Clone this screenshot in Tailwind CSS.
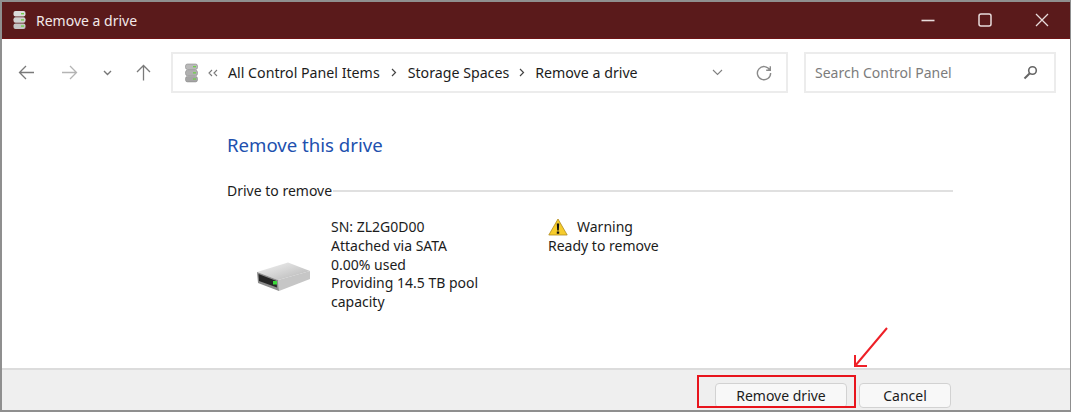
<!DOCTYPE html>
<html lang="en">
<head>
<meta charset="UTF-8">
<script src="https://cdn.jsdelivr.net/npm/@tailwindcss/browser@4"></script>
<title>Remove a drive</title>
</head>
<body class="bg-white">
<div class="relative w-[1071px] h-[412px] flex flex-col overflow-hidden bg-white border-t-2 border-l-2 border-b-2 border-r border-[#8f8f8f] font-['Noto_Sans','Open_Sans',sans-serif] text-[14px] text-[#1c1c1c]">

	<!-- title bar -->
	<div class="h-[37px] shrink-0 flex items-center bg-[#5a1a1b] border-b border-[#6e1416] text-white">
		<svg class="ml-[11px] w-[13px] h-[20px]" viewBox="0 0 13 20">
			<rect x="0.5" y="1" width="12" height="5.5" rx="2" fill="#dcdcdc"/>
			<rect x="0.5" y="7.2" width="12" height="5.5" rx="2" fill="#d0d0d0"/>
			<rect x="0.5" y="13.4" width="12" height="5.5" rx="2" fill="#c4c4c4"/>
			<rect x="8" y="3" width="3" height="1.4" fill="#6fd04a"/>
			<rect x="8" y="9.2" width="3" height="1.4" fill="#6fd04a"/>
			<rect x="8" y="15.4" width="3" height="1.4" fill="#6fd04a"/>
		</svg>
		<span class="ml-[10px] text-[14px] text-[#f3e9e9]">Remove a drive</span>
		<div class="ml-auto flex items-center gap-[43px] mr-[21px]">
			<svg class="w-[14px] h-[14px]" viewBox="0 0 14 14"><path d="M0.500 7.500h13" stroke="#e8dcdc" stroke-width="1.6"/></svg>
			<svg class="w-[14px] h-[14px]" viewBox="0 0 14 14"><rect x="1" y="1" width="12" height="12" rx="2" fill="none" stroke="#e8dcdc" stroke-width="1.500"/></svg>
			<svg class="w-[14px] h-[14px]" viewBox="0 0 14 14"><path d="M1 1l12 12M13 1L1 13" stroke="#e8dcdc" stroke-width="1.300"/></svg>
		</div>
	</div>

	<!-- navigation row -->
	<div class="h-[55px] shrink-0 flex items-start pt-[13px]">
		<div class="w-[169px] h-[41px] shrink-0 flex items-center">
			<svg class="ml-[16px] w-[16px] h-[15px]" viewBox="0 0 16 15"><path d="M16 7.500H1.500M8 1L1.500 7.500 8 14" fill="none" stroke="#7a7a7a" stroke-width="1.300"/></svg>
			<svg class="ml-[28px] w-[16px] h-[15px]" viewBox="0 0 16 15"><path d="M0 7.500h14.500M8 1l6.500 6.500L8 14" fill="none" stroke="#b4b4b4" stroke-width="1.300"/></svg>
			<svg class="ml-[25px] w-[9px] h-[6px]" viewBox="0 0 9 6"><path d="M1 1l3.500 3.500L8 1" fill="none" stroke="#777" stroke-width="1.400"/></svg>
			<svg class="ml-[24px] w-[15px] h-[17px]" viewBox="0 0 15 17"><path d="M7.500 16.500V1.500M1 8l6.500-6.500L14 8" fill="none" stroke="#7a7a7a" stroke-width="1.300"/></svg>
		</div>
		<div class="w-[617px] h-[41px] shrink-0 flex items-center border-2 border-[#ececec]">
			<svg class="ml-[12px] w-[13px] h-[20px]" viewBox="0 0 13 20">
				<rect x="0.5" y="1" width="12" height="5.5" rx="2" fill="#b9b9b9" stroke="#8c8c8c" stroke-width="0.6"/>
				<rect x="0.5" y="7.2" width="12" height="5.5" rx="2" fill="#b0b0b0" stroke="#8c8c8c" stroke-width="0.6"/>
				<rect x="0.5" y="13.4" width="12" height="5.5" rx="2" fill="#a5a5a5" stroke="#8c8c8c" stroke-width="0.6"/>
				<rect x="8" y="3" width="3" height="1.3" fill="#6fd04a"/>
				<rect x="8" y="9.2" width="3" height="1.3" fill="#6fd04a"/>
				<rect x="8" y="15.4" width="3" height="1.3" fill="#6fd04a"/>
			</svg>
			<svg class="ml-[10px] w-[10px] h-[8px]" viewBox="0 0 10 8"><path d="M4 1L1 4l3 3M9 1L6 4l3 3" fill="none" stroke="#777" stroke-width="1.100"/></svg>
			<span class="ml-[10px] text-[14.2px]">All Control Panel Items</span>
			<svg class="ml-[11px] w-[6px] h-[9px]" viewBox="0 0 6 9"><path d="M1 1l3.500 3.500L1 8" fill="none" stroke="#444" stroke-width="1.200"/></svg>
			<span class="ml-[11px] text-[14.2px]">Storage Spaces</span>
			<svg class="ml-[10px] w-[6px] h-[9px]" viewBox="0 0 6 9"><path d="M1 1l3.500 3.500L1 8" fill="none" stroke="#444" stroke-width="1.200"/></svg>
			<span class="ml-[10px] text-[14.2px]">Remove a drive</span>
			<svg class="ml-auto w-[11px] h-[7px]" viewBox="0 0 11 7"><path d="M1 1l4.500 4.500L10 1" fill="none" stroke="#808080" stroke-width="1.100"/></svg>
			<svg class="ml-[33px] mr-[14px] w-[16px] h-[16px]" viewBox="0 0 16 16"><path d="M13.800 5A6.600 6.600 0 1 0 14.600 8M14.300 1.200V5.300H10.200" fill="none" stroke="#8a8a8a" stroke-width="1.400"/></svg>
		</div>
		<div class="w-[252px] h-[41px] ml-[16px] shrink-0 flex items-center border-2 border-[#ececec]">
			<span class="ml-[9px] text-[#7c7c7c] text-[14px]">Search Control Panel</span>
			<svg class="ml-auto mr-[16px] w-[15px] h-[15px]" viewBox="0 0 15 15"><circle cx="9.500" cy="5.500" r="3.800" fill="none" stroke="#666" stroke-width="1.600"/><path d="M6.800 8.200L1.500 13.500" stroke="#666" stroke-width="2"/></svg>
		</div>
	</div>

	<!-- main content -->
	<div class="flex-1 min-h-0 pl-[225px] pr-[117px] pt-[39px]">
		<h1 class="text-[18.6px] leading-[24px] text-[#2150ae]">Remove this drive</h1>
		<div class="mt-[24px] flex items-center leading-[20px]">
			<span>Drive to remove</span>
			<div class="flex-1 h-[2px] ml-[1px] bg-[#e0e0e0]"></div>
		</div>
		<div class="flex mt-[17px]">
			<div class="w-[104px] shrink-0 pl-[29px] pt-[44px]">
				<svg class="w-[56px] h-[31px]" viewBox="0 0 56 31">
					<defs>
						<linearGradient id="driveTop" x1="0" y1="0" x2="1" y2="1">
							<stop offset="0" stop-color="#f4f4f4"/>
							<stop offset="1" stop-color="#b4b4b4"/>
						</linearGradient>
					</defs>
					<path d="M1 10L32 .5 54 9 22 18z" fill="url(#driveTop)"/>
					<path d="M22 18L54 9v8L23 29z" fill="#c6c6c6"/>
					<path d="M1 10l21 8 1 11L2 21z" fill="#8c8c8c"/>
					<path d="M2.500 12l18 7 .5 6.500L3 19z" fill="#262626"/>
					<rect x="17" y="19" width="4" height="3.500" fill="#3ad83a"/>
				</svg>
			</div>
			<div class="w-[160px] mr-[57px] shrink-0 leading-[18.75px]">
				<p>SN: ZL2G0D00</p>
				<p>Attached via SATA</p>
				<p>0.00% used</p>
				<p>Providing 14.5 TB pool capacity</p>
			</div>
			<div class="leading-[18.75px]">
				<div class="flex items-center">
					<svg class="w-[20px] h-[18px]" viewBox="0 0 20 18">
						<path d="M10 1L19.200 17H.8z" fill="#f6cc2c" stroke="#b08a1e" stroke-width="0.8" stroke-linejoin="round"/>
						<path d="M8.800 5.500h2.400l-.4 7H9.200zM8.800 13.500h2.400v2.200H8.800z" fill="#111"/>
					</svg>
					<span class="ml-[9px]">Warning</span>
				</div>
				<p>Ready to remove</p>
			</div>
		</div>
	</div>

	<!-- footer -->
	<div class="h-[42px] shrink-0 flex items-start justify-end pt-[13px] pr-[119px] gap-[12px] bg-[#efefef] border-t-2 border-[#dcdcdc]">
		<button class="w-[132px] h-[25px] flex items-center justify-center rounded-[4px] bg-[#f8f8f8] border border-[#d2d2d2]">Remove drive</button>
		<button class="w-[92px] h-[25px] flex items-center justify-center rounded-[4px] bg-[#f8f8f8] border border-[#d2d2d2]">Cancel</button>
	</div>

	<!-- annotation: red box and arrow -->
	<div class="absolute left-[695px] top-[373px] w-[159px] h-[33px] border-2 border-[#e8141c]"></div>
	<svg class="absolute left-[848px] top-[321px] w-[40px] h-[48px]" viewBox="0 0 40 48">
		<path d="M37 5L5 43M5 32V43H17" fill="none" stroke="#ee2027" stroke-width="2"/>
	</svg>
</div>
</body>
</html>
